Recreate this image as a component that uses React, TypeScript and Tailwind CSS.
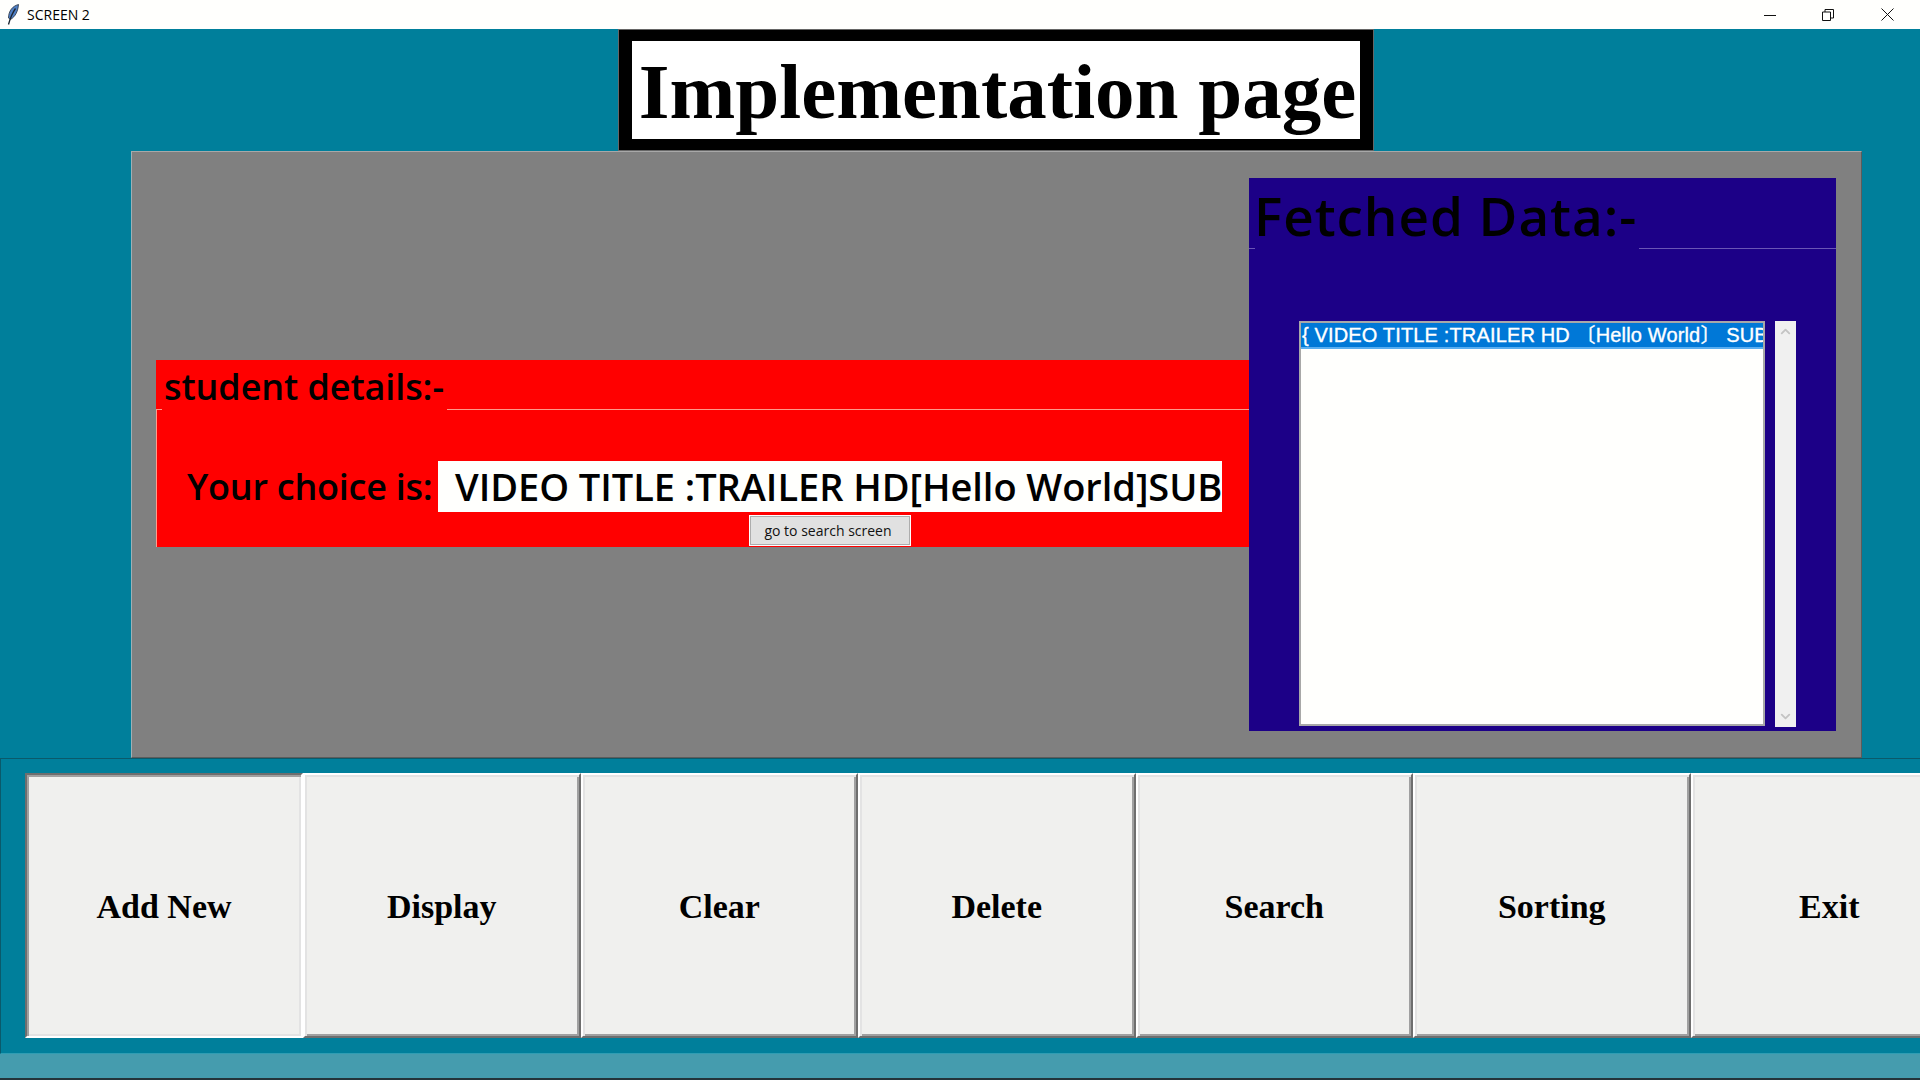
import React from "react";
import { ChevronDown, ChevronUp } from "lucide-react";

const SERIF = "font-['Liberation_Serif','Times_New_Roman',serif]";
const COMIC = "font-['Comic_Sans_MS','Open_Sans',sans-serif]";

const actions = ["Add New", "Display", "Clear", "Delete", "Search", "Sorting", "Exit"];

const TitleBar: React.FC = () => (
  <div className="flex h-[29px] shrink-0 items-center bg-[#fffffd] pl-[7px]">
    <svg width="12" height="21" viewBox="0 0 12 21" fill="none">
      <path d="M11.5 0.5C5.5 2 1.5 7 1.5 14L3.5 15.5C8.5 12.5 11 7 11.5 0.5Z" fill="#4f7fc4" stroke="#26303f" strokeWidth="0.8" />
      <path d="M8.5 4.5C6 8 3.5 13 1.5 20.5" stroke="#1d2530" strokeWidth="1.3" />
    </svg>
    <span className="ml-[8px] font-['Open_Sans',sans-serif] text-[14px] text-black">SCREEN 2</span>
    <div className="ml-auto flex items-center">
      <svg width="12" height="12" viewBox="0 0 12 12" className="mr-[46px]">
        <path d="M0 6.5H12" stroke="#111" strokeWidth="1" />
      </svg>
      <svg width="12" height="12" viewBox="0 0 12 12" className="mr-[47px]" fill="none">
        <path d="M0.5 3H8.5V11.5H0.5Z M3 3V0.5H11.5V9H8.5" stroke="#111" strokeWidth="1" />
      </svg>
      <svg width="13" height="13" viewBox="0 0 13 13" className="mr-[26px]">
        <path d="M0.5 0.5L12.5 12.5M12.5 0.5L0.5 12.5" stroke="#111" strokeWidth="1" />
      </svg>
    </div>
  </div>
);

const StudentDetails: React.FC = () => (
  <div className="mt-[208px] flex h-[187px] w-[1093px] shrink-0 flex-col bg-[#ff0000] text-black">
    <div className="flex h-[50px] shrink-0 items-end">
      <div className="h-px w-[6px] bg-[#ff9a8a]" />
      <div className={`${COMIC} h-[50px] w-[285px] whitespace-nowrap pl-[2px] pt-[4px] text-[36px] font-semibold leading-[46px] tracking-[-0.1px]`}>
        student details:-
      </div>
      <div className="h-px flex-1 bg-[#ff9a8a]" />
    </div>
    <div className="flex flex-1 flex-col border-l border-[#ff9a8a]">
      <div className="mt-[51px] flex h-[51px] items-center">
        <span className={`${COMIC} ml-[30px] w-[251px] whitespace-nowrap text-[36px] font-semibold tracking-[-0.25px]`}>
          Your choice is:
        </span>
        <div className={`${COMIC} h-[51px] w-[784px] overflow-hidden whitespace-nowrap bg-[#fffffd] pl-[17px] text-[38px] font-semibold leading-[51px] tracking-[-0.05px]`}>
          VIDEO TITLE :TRAILER HD[Hello World]SUB
        </div>
      </div>
      <button className="ml-[592px] mt-[3px] h-[31px] w-[162px] border border-white bg-[#e1e1e1] pr-[4px] font-['Open_Sans',sans-serif] text-[14px] text-[#111] shadow-[inset_0_0_0_1px_#adadad]">
        go to search screen
      </button>
    </div>
  </div>
);

const FetchedData: React.FC = () => (
  <div className="mt-[26px] flex h-[553px] w-[587px] shrink-0 flex-col bg-[#1c0087]">
    <div className="flex h-[71px] shrink-0 items-end">
      <div className="h-px w-[6px] bg-[#6a55b5]" />
      <div className={`${COMIC} -ml-[2px] h-[71px] w-[386px] whitespace-nowrap pl-px pt-[6px] text-[53px] font-semibold leading-[64px] tracking-[0.95px] text-black`}>
        Fetched Data:-
      </div>
      <div className="h-px flex-1 bg-[#6a55b5]" />
    </div>
    <div className="mt-[72px] flex items-start">
      <div className="ml-[50px] h-[405px] w-[466px] border-2 border-[#a8a8a8] bg-[#fffffd]">
        <div className="h-[26px] overflow-hidden whitespace-nowrap border-b-2 border-[#5aaef0] bg-[#0078d7] pl-[1px] font-['Liberation_Sans','Noto_Sans_CJK_SC',sans-serif] text-[20px] leading-[24px] tracking-[0.15px] text-white [-webkit-text-stroke:0.35px_white]">
          {"{ VIDEO TITLE :TRAILER HD 〔Hello World〕 SUB"}
        </div>
      </div>
      <div className="ml-[10px] flex h-[406px] w-[21px] flex-col items-center justify-between bg-[#f0f0f0] py-[3px] text-[#c4c4c4]">
        <ChevronUp size={15} strokeWidth={3} />
        <ChevronDown size={15} strokeWidth={3} />
      </div>
    </div>
  </div>
);

const App: React.FC = () => {
  return (
    <div className="flex h-[1080px] w-[1920px] flex-col overflow-hidden bg-[#007f9b]">
      <TitleBar />

      <div className="flex h-[122px] shrink-0 pl-[618px]">
        <div className={`${SERIF} h-[122px] w-[756px] border-x-[14px] border-y-[12px] border-black bg-white pl-[3px] pt-[5px] text-center text-[79px] font-bold leading-[92px] whitespace-nowrap text-black outline outline-1 -outline-offset-1 outline-[#666666]`}>
          Implementation page
        </div>
      </div>

      <div className="flex h-[607px] shrink-0 pl-[131px]">
        <div className="flex h-[607px] w-[1731px] items-start border border-b-[#5c5c5c] border-l-[#9fb0b5] border-r-[#5c5c5c] border-t-[#a8a8a8] bg-[#808080] pl-[24px]">
          <StudentDetails />
          <FetchedData />
        </div>
      </div>

      <div className="h-[296px] shrink-0 overflow-hidden border-b border-l border-t border-b-[#2f9db3] border-l-[#0a5a6b] border-t-[#0a5a6b] pl-[24px] pt-[14px]">
        <div className="flex w-[1950px]">
          {actions.map((label, i) => (
            <button
              key={label}
              className={
                i === 0
                  ? `${SERIF} h-[265px] w-[278px] shrink-0 border-2 border-b-white border-l-[#6e6e6e] border-r-white border-t-[#6e6e6e] bg-[#f0f0ee] pt-[2px] text-[34px] font-bold text-black shadow-[inset_2px_2px_0_#a0a0a0,inset_-2px_-2px_0_#e3e3e3]`
                  : `${SERIF} h-[265px] w-[277.5px] shrink-0 border-2 border-b-[#6e6e6e] border-l-white border-r-[#6e6e6e] border-t-white bg-[#f0f0ee] pt-[2px] text-[34px] font-bold text-black shadow-[inset_2px_2px_0_#e3e3e3,inset_-2px_-2px_0_#a0a0a0]`
              }
            >
              {label}
            </button>
          ))}
        </div>
      </div>

      <div className="h-[24px] shrink-0 bg-[#459cae]" />
      <div className="flex-1 bg-[#24343a]" />
    </div>
  );
};

export default App;
